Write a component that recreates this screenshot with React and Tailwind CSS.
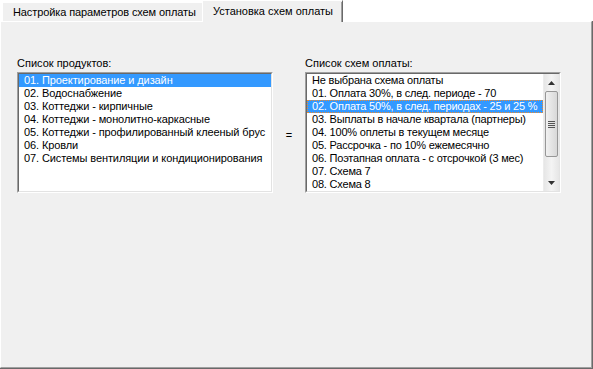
const PRODUCTS = [
  '01. Проектирование и дизайн',
  '02. Водоснабжение',
  '03. Коттеджи - кирпичные',
  '04. Коттеджи - монолитно-каркасные',
  '05. Коттеджи - профилированный клееный брус',
  '06. Кровли',
  '07. Системы вентиляции и кондиционирования',
]

const SCHEMES = [
  'Не выбрана схема оплаты',
  '01. Оплата 30%, в след. периоде - 70',
  '02. Оплата 50%, в след. периодах - 25 и 25 %',
  '03. Выплаты в начале квартала (партнеры)',
  '04. 100% оплеты в текущем месяце',
  '05. Рассрочка - по 10% ежемесячно',
  '06. Поэтапная оплата - с отсрочкой (3 мес)',
  '07. Схема 7',
  '08. Схема 8',
]

function Sunken({ children }) {
  return (
    <div className="w-[256px] h-[121px] border border-t-[#a0a0a0] border-l-[#a0a0a0] border-b-white border-r-white">
      <div className="w-full h-full border border-t-[#696969] border-l-[#696969] border-b-[#e3e3e3] border-r-[#e3e3e3] bg-white overflow-hidden flex">
        {children}
      </div>
    </div>
  )
}

function Arrow({ up }) {
  return (
    <svg width="7" height="4" viewBox="0 0 7 4">
      <path d={up ? 'M3.5 0 L7 4 L0 4 Z' : 'M0 0 L7 0 L3.5 4 Z'} fill="#333" />
    </svg>
  )
}

function Scrollbar() {
  return (
    <div className="w-[16px] h-full shrink-0 flex flex-col bg-gradient-to-r from-[#e6e6e6] via-[#f4f4f4] to-[#e6e6e6] border-l border-[#ececec]">
      <div className="h-[17px] flex items-center justify-center">
        <Arrow up />
      </div>
      <div className="mx-px h-[66px] rounded-[2px] border border-[#979797] bg-gradient-to-r from-[#f1f1f1] to-[#d8d8d8] flex items-center justify-center">
        <div className="flex flex-col gap-[1px]">
          <div className="w-[7px] h-px bg-[#555]" />
          <div className="w-[7px] h-px bg-[#555]" />
          <div className="w-[7px] h-px bg-[#555]" />
          <div className="w-[7px] h-px bg-[#555]" />
        </div>
      </div>
      <div className="flex-1" />
      <div className="h-[17px] flex items-center justify-center">
        <Arrow />
      </div>
    </div>
  )
}

export default function App() {
  return (
    <div className="w-[593px] h-[369px] bg-white font-['Liberation_Sans',Arial,sans-serif] text-[11px] leading-[13px] text-black">
      {/* Tabs */}
      <div className="h-[21px] flex items-end pl-[2px]">
        <div className="w-[200px] h-[19px] bg-[#f0f0f0] border-t border-l border-white pl-[10px] pt-[3px] whitespace-nowrap overflow-hidden tracking-[-0.1px]">
          Настройка параметров схем оплаты
        </div>
        <div className="relative z-10 -mb-px w-[141px] h-[22px] bg-[#f0f0f0] border-t border-l border-white border-r border-r-[#696969] pl-[10px] pt-[4px] whitespace-nowrap">
          <div className="absolute right-0 top-[1px] bottom-0 w-px bg-[#a0a0a0]" />
          Установка схем оплаты
        </div>
      </div>

      {/* Panel */}
      <div className="h-[348px] border-r border-b border-[#696969]">
        <div className="h-full bg-[#f0f0f0] border-t border-l border-white border-r border-b border-r-[#a0a0a0] border-b-[#a0a0a0] pl-[16px] pt-[35px]">
          <div className="grid grid-cols-[256px_32px_256px] gap-y-[2px]">
            <div className="h-[13px] whitespace-nowrap">Список продуктов:</div>
            <div />
            <div className="h-[13px] whitespace-nowrap">Список схем оплаты:</div>

            <Sunken>
              <div className="flex-1 min-w-0 tracking-[-0.1px]">
                {PRODUCTS.map((p, i) => (
                  <div
                    key={p}
                    className={`h-[13px] pl-[5px] whitespace-nowrap ${i === 0 ? 'bg-[#3399ff] text-white' : ''}`}
                  >
                    {p}
                  </div>
                ))}
              </div>
            </Sunken>

            <div className="flex items-center justify-center pt-[6px]">=</div>

            <Sunken>
              <div className="flex-1 min-w-0 tracking-[-0.2px]">
                {SCHEMES.map((s, i) => (
                  <div
                    key={s}
                    className={`h-[13px] whitespace-nowrap ${
                      i === 2
                        ? 'bg-[#3399ff] text-white border border-dotted border-[#f08a2c] pl-[4px] leading-[11px]'
                        : 'pl-[5px]'
                    }`}
                  >
                    {s}
                  </div>
                ))}
              </div>
              <Scrollbar />
            </Sunken>
          </div>
        </div>
      </div>
    </div>
  )
}
